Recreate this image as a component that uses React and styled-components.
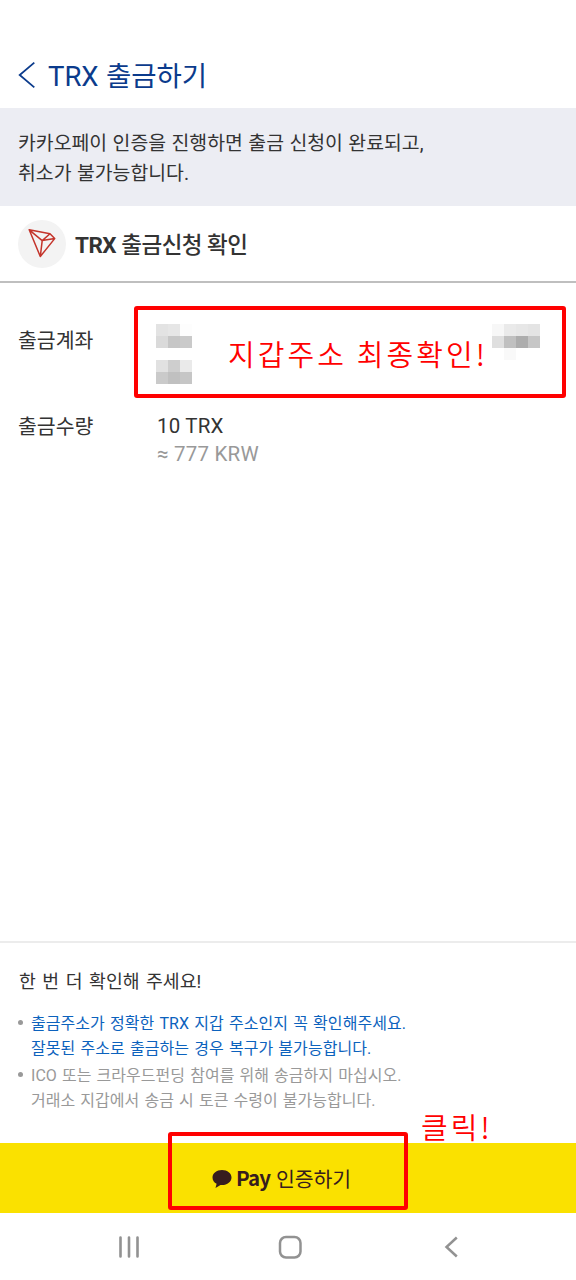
import React from "react";
import styled, { createGlobalStyle } from "styled-components";

const GlobalStyle = createGlobalStyle`
  * {
    box-sizing: border-box;
  }
  body {
    margin: 0;
    background: #fff;
    font-family: Roboto, "Noto Sans CJK KR", sans-serif;
    color: #333;
  }
  h1, h2, h3, p, ul, dl, dt, dd {
    margin: 0;
    padding: 0;
    font-weight: 400;
  }
`;

const addressTiles = [
  { x: 0, y: 0, color: "#e3e3e3" },
  { x: 1, y: 0, color: "#e6e6e6" },
  { x: 2, y: 0, color: "#fdfdfd" },
  { x: 0, y: 1, color: "#dadada" },
  { x: 1, y: 1, color: "#c6c6c6" },
  { x: 2, y: 1, color: "#cacaca" },
  { x: 0, y: 3, color: "#e1e1e1" },
  { x: 1, y: 3, color: "#cecece" },
  { x: 2, y: 3, color: "#eaeaea" },
  { x: 0, y: 4, color: "#cacaca" },
  { x: 1, y: 4, color: "#c0c0c0" },
  { x: 2, y: 4, color: "#c6c6c6" },
  { x: 28, y: 0, color: "#f7f7f7" },
  { x: 29, y: 0, color: "#eaeaea" },
  { x: 30, y: 0, color: "#e7e7e7" },
  { x: 31, y: 0, color: "#e4e4e4" },
  { x: 28, y: 1, color: "#dfdfdf" },
  { x: 29, y: 1, color: "#c0c0c0" },
  { x: 30, y: 1, color: "#adadad" },
  { x: 31, y: 1, color: "#c6c6c6" },
  { x: 29, y: 2, color: "#f9f9f9" },
];

function MaskedAddress() {
  return (
    <svg width="384" height="60" shapeRendering="crispEdges">
      {addressTiles.map((t) => (
        <rect
          key={`${t.x}-${t.y}`}
          x={t.x * 12}
          y={t.y * 12}
          width="12"
          height="12"
          fill={t.color}
        />
      ))}
    </svg>
  );
}

function TronLogo() {
  return (
    <svg width="48" height="48" viewBox="0 0 48 48" fill="none">
      <path
        d="M11.2 9.800 32 13.700 36.700 18.600 22.300 36.500Z M11.2 9.800 24.200 20.600 32 13.700 M24.200 20.600 36.700 18.600 M24.200 20.600 22.300 36.500"
        stroke="#c4342b"
        strokeWidth="1.5"
        strokeLinejoin="round"
      />
    </svg>
  );
}

export default function App() {
  return (
    <Screen>
      <GlobalStyle />
      <Header>
        <svg width="18" height="28" viewBox="0 0 18 28" fill="none">
          <path d="M16.3 1.6 1.7 14 16.3 26.4" stroke="#0b3b8c" strokeWidth="1.8" />
        </svg>
        <h1>TRX 출금하기</h1>
      </Header>
      <Notice>
        <p>카카오페이 인증을 진행하면 출금 신청이 완료되고,</p>
        <p>취소가 불가능합니다.</p>
      </Notice>
      <CoinBar>
        <CoinBadge>
          <TronLogo />
        </CoinBadge>
        <h2>
          <b>TRX</b> 출금신청 확인
        </h2>
      </CoinBar>
      <Details>
        <Row $height={86}>
          <dt>출금계좌</dt>
          <dd>
            <MaskedAddress />
          </dd>
        </Row>
        <Row $height={60}>
          <dt>출금수량</dt>
          <dd>
            <Amount>10 TRX</Amount>
            <Amount $muted>≈ 777 KRW</Amount>
          </dd>
        </Row>
        <Callout $left={134} $top={23} $width={432} $height={92} />
        <RedNote $left={228} $top={49}>
          지갑주소 최종확인!
        </RedNote>
      </Details>
      <Caution>
        <h3>한 번 더 확인해 주세요!</h3>
        <ul>
          <CautionItem $color="#0c62bd" $spacing={0.06}>
            출금주소가 정확한 TRX 지갑 주소인지 꼭 확인해주세요.
            <br />
            잘못된 주소로 출금하는 경우 복구가 불가능합니다.
          </CautionItem>
          <CautionItem $color="#999" $spacing={0.03}>
            ICO 또는 크라우드펀딩 참여를 위해 송금하지 마십시오.
            <br />
            거래소 지갑에서 송금 시 토큰 수령이 불가능합니다.
          </CautionItem>
        </ul>
      </Caution>
      <PayButton>
        <svg width="20" height="22" viewBox="0 -2 20 22">
          <path
            d="M10 1C4.600 1 .5 4.300 .5 8.500c0 2.800 1.600 5 4.100 6.300L3.500 19l5-3c.5.1 1 .1 1.500.1 5.400 0 9.500-3.400 9.500-7.600S15.400 1 10 1Z"
            fill="#371d1e"
          />
        </svg>
        <PayWord>Pay</PayWord>
        <PayLabel>인증하기</PayLabel>
        <Callout $left={168} $top={-11} $width={240} $height={78} />
        <RedNote $left={421} $top={-38}>
          클릭!
        </RedNote>
      </PayButton>
      <NavBar>
        <svg width="24" height="24" viewBox="0 0 24 24">
          <path
            d="M3.500 2.500v19M12 2.500v19M20.500 2.500v19"
            stroke="#929292"
            strokeWidth="2.600"
            strokeLinecap="round"
          />
        </svg>
        <svg width="24" height="24" viewBox="0 0 24 24">
          <rect x="2" y="2" width="20.500" height="20.500" rx="6" fill="none" stroke="#929292" strokeWidth="2.500" />
        </svg>
        <svg width="24" height="24" viewBox="0 0 24 24">
          <path d="M17.800 2.500 7.500 12l10.300 9.500" fill="none" stroke="#929292" strokeWidth="2.500" />
        </svg>
      </NavBar>
    </Screen>
  );
}

const Screen = styled.main`
  display: flex;
  flex-direction: column;
  width: 576px;
  height: 1280px;
  overflow: hidden;
  background: #fff;
`;

const Header = styled.header`
  display: flex;
  align-items: center;
  gap: 12px;
  height: 108px;
  padding: 42px 18px 0;
  color: #0b3b8c;
  h1 {
    padding-top: 3px;
    font-size: 27.5px;
    line-height: 40px;
    word-spacing: 0.5px;
  }
`;

const Notice = styled.section`
  height: 98px;
  padding: 21px 18px 0;
  background: #ecedf3;
  font-size: 19.4px;
  line-height: 30px;
  word-spacing: 0.6px;
  white-space: nowrap;
`;

const CoinBar = styled.section`
  display: flex;
  align-items: center;
  gap: 9px;
  height: 77px;
  padding: 0 18px;
  border-bottom: 2px solid #bfbfbf;
  h2 {
    padding-top: 2px;
    font-size: 22.5px;
    font-weight: 500;
    line-height: 32px;
    letter-spacing: -0.5px;
  }
  b {
    font-weight: 700;
  }
`;

const CoinBadge = styled.div`
  width: 48px;
  height: 48px;
  border-radius: 50%;
  background: #f3f3f3;
`;

const Details = styled.dl`
  position: relative;
  flex: 1;
  padding: 41px 18px 0;
`;

const Row = styled.div`
  display: flex;
  height: ${(props) => props.$height}px;
  dt {
    width: 138px;
    padding-top: 1px;
    font-size: 20.5px;
    line-height: 32px;
  }
`;

const Amount = styled.div`
  padding-left: 1px;
  font-size: 20.5px;
  line-height: ${(props) => (props.$muted ? 24 : 32)}px;
  letter-spacing: 0.2px;
  color: ${(props) => (props.$muted ? "#999" : "#333")};
`;

const Callout = styled.div`
  position: absolute;
  left: ${(props) => props.$left}px;
  top: ${(props) => props.$top}px;
  width: ${(props) => props.$width}px;
  height: ${(props) => props.$height}px;
  border: 4px solid #f00;
  border-radius: 3px;
`;

const RedNote = styled.span`
  position: absolute;
  left: ${(props) => props.$left}px;
  top: ${(props) => props.$top}px;
  font-family: "Noto Sans CJK KR", sans-serif;
  font-size: 29px;
  font-weight: 350;
  line-height: 42px;
  letter-spacing: 3.1px;
  white-space: nowrap;
  color: #f00;
`;

const Caution = styled.section`
  height: 202px;
  padding: 25px 18px 0;
  border-top: 2px solid #ececec;
  white-space: nowrap;
  h3 {
    margin-bottom: 16px;
    padding-left: 1px;
    font-size: 18.3px;
    line-height: 28px;
    word-spacing: 2px;
  }
  ul {
    list-style: none;
  }
`;

const CautionItem = styled.li`
  position: relative;
  margin-bottom: 3px;
  padding-left: 13px;
  font-size: 16px;
  line-height: 24.5px;
  letter-spacing: ${(props) => props.$spacing}px;
  word-spacing: 1.1px;
  color: ${(props) => props.$color};
  &::before {
    content: "";
    position: absolute;
    left: 0;
    top: 8px;
    width: 5px;
    height: 5px;
    border-radius: 50%;
    background: #999;
  }
`;

const PayButton = styled.div`
  position: relative;
  display: flex;
  align-items: center;
  height: 70px;
  padding-left: 212px;
  background: #fae100;
  color: #371d1e;
  font-size: 20.5px;
`;

const PayWord = styled.span`
  margin: -2px 6px 0 4px;
  font-family: "Noto Sans CJK KR", sans-serif;
  font-weight: 700;
  letter-spacing: -0.9px;
`;

const PayLabel = styled.span`
  letter-spacing: -0.1px;
`;

const NavBar = styled.nav`
  display: flex;
  justify-content: space-between;
  align-items: center;
  height: 67px;
  padding: 1px 113px 0 117px;
`;
